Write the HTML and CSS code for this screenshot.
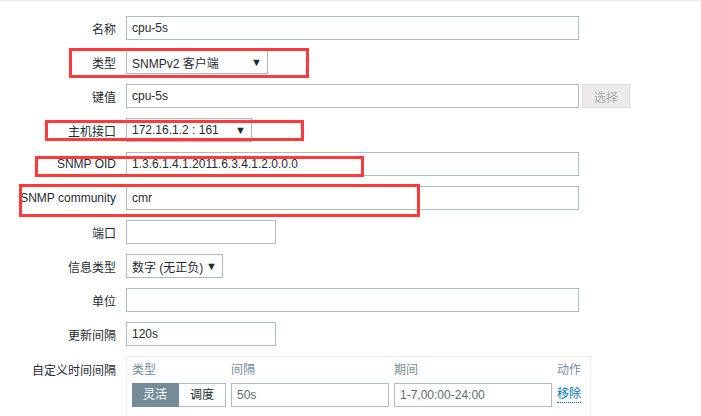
FILE: index.html
```html
<!DOCTYPE html>
<html lang="zh-CN">
  <head>
    <meta charset="UTF-8" />
    <meta name="viewport" content="width=device-width, initial-scale=1.0" />
    <title>监控项</title>
    <link rel="stylesheet" href="styles.css">
  </head>
  <body>
    <div id="page">
      <ul class="formList">
        <li class="row">
          <label class="rowLabel">名称</label>
          <div class="field"><div class="input wide">cpu-5s</div></div>
        </li>
        <li class="row">
          <label class="rowLabel">类型</label>
          <div class="field"><div class="select typeSelect"><span>SNMPv2 客户端</span><span class="arrow">▼</span></div></div>
        </li>
        <li class="row">
          <label class="rowLabel">键值</label>
          <div class="field">
            <div class="input wide">cpu-5s</div>
            <button class="btnDisabled">选择</button>
          </div>
        </li>
        <li class="row">
          <label class="rowLabel">主机接口</label>
          <div class="field"><div class="select hostSelect"><span>172.16.1.2 : 161</span><span class="arrow">▼</span></div></div>
        </li>
        <li class="row">
          <label class="rowLabel">SNMP OID</label>
          <div class="field"><div class="input wide">1.3.6.1.4.1.2011.6.3.4.1.2.0.0.0</div></div>
        </li>
        <li class="row">
          <label class="rowLabel">SNMP community</label>
          <div class="field"><div class="input wide">cmr</div></div>
        </li>
        <li class="row">
          <label class="rowLabel">端口</label>
          <div class="field"><div class="input short"></div></div>
        </li>
        <li class="row">
          <label class="rowLabel">信息类型</label>
          <div class="field"><div class="select infoSelect"><span>数字 (无正负)</span><span class="arrow">▼</span></div></div>
        </li>
        <li class="row">
          <label class="rowLabel">单位</label>
          <div class="field"><div class="input wide"></div></div>
        </li>
        <li class="row">
          <label class="rowLabel">更新间隔</label>
          <div class="field"><div class="input short">120s</div></div>
        </li>
        <li class="row">
          <label class="rowLabel intervalLabel">自定义时间间隔</label>
          <div class="field">
            <div class="intervalBox">
              <div class="intervalHead">类型</div>
              <div class="intervalHead">间隔</div>
              <div class="intervalHead">期间</div>
              <div class="intervalHead actionHead">动作</div>
              <div class="segmented">
                <span class="seg segActive">灵活</span>
                <span class="seg">调度</span>
              </div>
              <div class="input cellInput muted">50s</div>
              <div class="input cellInput muted">1-7,00:00-24:00</div>
              <a class="linkAction" href="#">移除</a>
            </div>
          </div>
        </li>
      </ul>

      <div class="mark markType"></div>
      <div class="mark markHost"></div>
      <div class="mark markOid"></div>
      <div class="mark markCommunity"></div>
    </div>
  </body>
</html>
```

FILE: styles.css
```css
body {
  margin: 0;
  background-color: #fff;
  color: #1f2c33;
  font-family: "Liberation Sans", Arial, "Noto Sans CJK SC", sans-serif;
  font-size: 12px;
}
#page {
  position: relative;
  height: 416px;
  overflow: hidden;
  border-top: 1px solid #ebeef0;
  box-sizing: border-box;
}
.formList {
  list-style: none;
  margin: 0;
  padding: 15px 0 0 0;
  display: flex;
  flex-direction: column;
  gap: 10px;
}
.row {
  display: grid;
  grid-template-columns: 116px auto;
  column-gap: 10px;
  align-items: center;
}
.rowLabel {
  text-align: right;
  white-space: nowrap;
}
.intervalLabel {
  align-self: start;
  padding-top: 5px;
}
.field {
  display: flex;
  align-items: center;
  gap: 3px;
}
.input {
  height: 24px;
  box-sizing: border-box;
  border: 1px solid #acbbc4;
  padding: 0 5px;
  line-height: 22px;
  background-color: #fff;
  white-space: nowrap;
  overflow: hidden;
}
.wide {
  width: 453px;
}
.short {
  width: 150px;
}
.select {
  height: 24px;
  box-sizing: border-box;
  border: 1px solid #acbbc4;
  padding: 0 5px 0 5px;
  display: flex;
  justify-content: space-between;
  align-items: center;
  white-space: nowrap;
}
.arrow {
  font-size: 11px;
  color: #1f2c33;
}
.typeSelect {
  width: 142px;
}
.hostSelect {
  width: 126px;
}
.infoSelect {
  width: 97px;
}
.btnDisabled {
  height: 24px;
  width: 48px;
  box-sizing: border-box;
  border: 1px solid #dcdcdc;
  background-color: #ebebeb;
  color: #acacac;
  font-family: inherit;
  font-size: 12px;
  padding: 0;
}
.intervalBox {
  width: 465px;
  height: 70px;
  box-sizing: border-box;
  border: 1px solid #ebeef0;
  border-bottom: none;
  padding: 5px 9px 0 5px;
  display: grid;
  grid-template-columns: 94px 158px 158px auto;
  grid-template-rows: 21px 24px;
  column-gap: 5px;
  align-items: center;
}
.intervalHead {
  color: #768d99;
  align-self: start;
  line-height: 16px;
}
.actionHead {
  text-align: right;
}
.segmented {
  display: flex;
  height: 24px;
}
.seg {
  flex: 1;
  box-sizing: border-box;
  border: 1px solid #acbbc4;
  border-left: none;
  line-height: 22px;
  text-align: center;
}
.segActive {
  background-color: #768d99;
  border-color: #768d99;
  color: #fff;
}
.cellInput {
  width: 158px;
}
.muted {
  color: #5d6d75;
}
.linkAction {
  color: #0275b8;
  text-decoration: none;
  border-bottom: 1px dotted #0275b8;
  justify-self: end;
  line-height: 15px;
}
.mark {
  position: absolute;
  border: 3px solid #ff3a3a;
  box-sizing: border-box;
}
.markType {
  left: 69px;
  top: 47px;
  width: 240px;
  height: 30px;
}
.markHost {
  left: 45px;
  top: 119px;
  width: 259px;
  height: 21px;
}
.markOid {
  left: 35px;
  top: 155px;
  width: 329px;
  height: 21px;
}
.markCommunity {
  left: 19px;
  top: 183px;
  width: 401px;
  height: 33px;
}
```
